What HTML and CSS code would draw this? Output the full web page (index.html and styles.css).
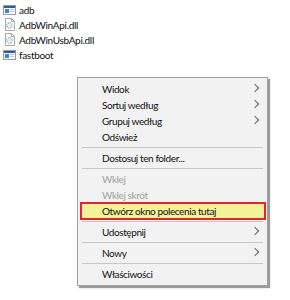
FILE: index.html
```html
<!DOCTYPE html>
<html>
<head>
  <link rel="stylesheet" href="styles.css">
</head>
<body>
  <ul class="files">
    <li>
      <svg class="ico" width="13" height="12" viewBox="0 0 13 12">
        <rect x="0.5" y="1.5" width="12" height="9" fill="#fff" stroke="#8a9bb0"/>
        <rect x="1" y="2" width="11" height="2" fill="#2a5caa"/>
        <rect x="2" y="5" width="4" height="4" fill="#3b83d6"/>
        <rect x="7" y="5" width="4" height="1" fill="#b8c4d2"/>
        <rect x="7" y="7" width="4" height="1" fill="#b8c4d2"/>
      </svg>
      adb
    </li>
    <li>
      <svg class="ico" width="13" height="13" viewBox="0 0 13 13">
        <path d="M2.5 0.5 H8.5 L11.5 3.5 V12.5 H2.5 Z" fill="#fff" stroke="#a9a9a9"/>
        <path d="M8.5 0.5 V3.5 H11.5" fill="none" stroke="#a9a9a9"/>
        <circle cx="6.5" cy="7.5" r="2.6" fill="none" stroke="#8fa8c0" stroke-width="1.4" stroke-dasharray="1.2 0.8"/>
        <circle cx="6.5" cy="7.5" r="1" fill="#c9d6e3"/>
      </svg>
      AdbWinApi.dll
    </li>
    <li>
      <svg class="ico" width="13" height="13" viewBox="0 0 13 13">
        <path d="M2.5 0.5 H8.5 L11.5 3.5 V12.5 H2.5 Z" fill="#fff" stroke="#a9a9a9"/>
        <path d="M8.5 0.5 V3.5 H11.5" fill="none" stroke="#a9a9a9"/>
        <circle cx="6.5" cy="7.5" r="2.6" fill="none" stroke="#8fa8c0" stroke-width="1.4" stroke-dasharray="1.2 0.8"/>
        <circle cx="6.5" cy="7.5" r="1" fill="#c9d6e3"/>
      </svg>
      AdbWinUsbApi.dll
    </li>
    <li>
      <svg class="ico" width="13" height="12" viewBox="0 0 13 12">
        <rect x="0.5" y="1.5" width="12" height="9" fill="#fff" stroke="#8a9bb0"/>
        <rect x="1" y="2" width="11" height="2" fill="#2a5caa"/>
        <rect x="2" y="5" width="4" height="4" fill="#3b83d6"/>
        <rect x="7" y="5" width="4" height="1" fill="#b8c4d2"/>
        <rect x="7" y="7" width="4" height="1" fill="#b8c4d2"/>
      </svg>
      fastboot
    </li>
  </ul>

  <div class="menu">
    <div class="item sub">Widok</div>
    <div class="item sub">Sortuj według</div>
    <div class="item sub">Grupuj według</div>
    <div class="item">Odśwież</div>
    <div class="sep"></div>
    <div class="item">Dostosuj ten folder...</div>
    <div class="sep"></div>
    <div class="item off">Wklej</div>
    <div class="item off">Wklej skrót</div>
    <div class="item marked">Otwórz okno polecenia tutaj</div>
    <div class="sep"></div>
    <div class="item sub">Udostępnij</div>
    <div class="sep"></div>
    <div class="item sub">Nowy</div>
    <div class="sep"></div>
    <div class="item">Właściwości</div>
  </div>
</body>
</html>
```

FILE: styles.css
```css
body {
  margin: 0;
  background: #fff;
  font-family: Lato, "Noto Sans", sans-serif;
  color: #111;
}

.files {
  list-style: none;
  margin: 0;
  padding: 2px 0 0 3px;
}

.files li {
  display: flex;
  align-items: center;
  gap: 3px;
  height: 15px;
  font-size: 10px;
  letter-spacing: -0.3px;
}

.ico {
  flex: none;
}

.menu {
  position: absolute;
  left: 77px;
  top: 77px;
  width: 189px;
  padding: 3px 0;
  background: #f2f2f2;
  border: 1px solid #a0a0a0;
  box-shadow: 2px 2px 1px #9a9a9a;
  font-size: 10px;
  letter-spacing: -0.4px;
}

.item {
  height: 16px;
  line-height: 16px;
  margin: 0 2px 0 3px;
  padding-left: 21px;
  position: relative;
  white-space: nowrap;
}

.item.sub::after {
  content: "";
  position: absolute;
  right: 7px;
  top: 4px;
  width: 5px;
  height: 5px;
  border-right: 1px solid #666;
  border-bottom: 1px solid #666;
  transform: rotate(-45deg);
}

.item.off {
  color: #a0a0a0;
}

.item.marked {
  background: #f2f29a;
  outline: 2px solid #e8232a;
  outline-offset: -1px;
}

.sep {
  height: 1px;
  margin: 2px 4px 2px 4px;
  background: #c8c8c8;
}
```
